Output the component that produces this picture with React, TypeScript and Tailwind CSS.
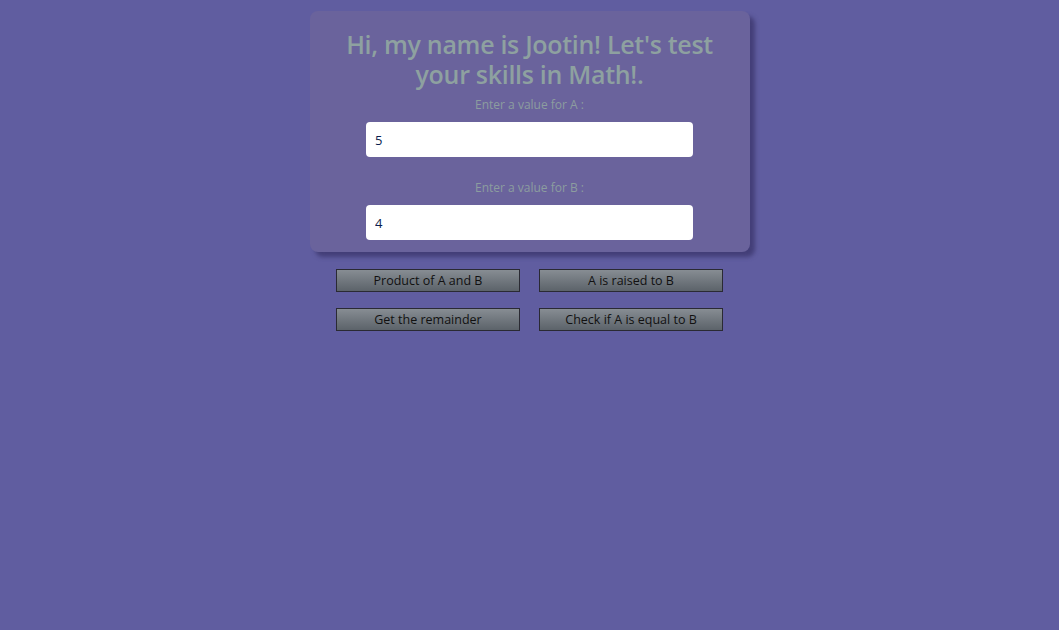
const Field = ({ label, value }: { label: string; value: string }) => (
  <div className="flex flex-col items-center">
    <label className="text-[12px] leading-[18px] text-[#8c9d9f]">{label}</label>
    <input
      readOnly
      value={value}
      className="mt-[8px] h-[35px] w-[327px] rounded-[4px] bg-white px-[9px] text-[13px] text-[#0b1d4f] outline-none"
    />
  </div>
);

const Btn = ({ children }: { children: string }) => (
  <button className="h-[23px] w-[184px] border border-[#2a2a33] bg-gradient-to-b from-[#878d93] to-[#5c636a] text-[12.5px] leading-[20px] text-[#111]">
    {children}
  </button>
);

const App = () => {
  return (
    <div
      className="flex min-h-[630px] w-full flex-col items-center bg-[#605da0] pt-[11px]"
      style={{ fontFamily: '"Open Sans", "Noto Sans", sans-serif' }}
    >
      <div className="flex w-[440px] flex-col items-center rounded-[8px] bg-[#6a639c] pb-[12px] pt-[18px] shadow-[5px_5px_4px_rgba(60,55,110,0.8)]">
        <h1 className="w-[390px] text-center text-[25px] font-semibold leading-[30px] tracking-[-0.3px] text-[#8ea1a0]">
          Hi, my name is Jootin! Let's test your skills in Math!.
        </h1>
        <div className="mt-[7px]">
          <Field label="Enter a value for A :" value="5" />
        </div>
        <div className="mt-[22px]">
          <Field label="Enter a value for B :" value="4" />
        </div>
      </div>
      <div className="mt-[17px] grid grid-cols-2 gap-x-[19px] gap-y-[16px]">
        <Btn>Product of A and B</Btn>
        <Btn>A is raised to B</Btn>
        <Btn>Get the remainder</Btn>
        <Btn>Check if A is equal to B</Btn>
      </div>
    </div>
  );
};

export default App;
